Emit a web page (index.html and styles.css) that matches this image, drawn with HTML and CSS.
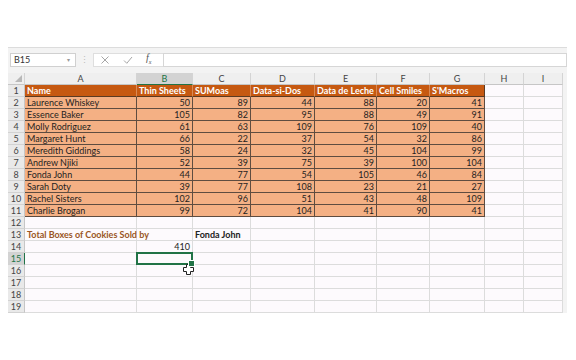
FILE: index.html
```html
<!DOCTYPE html>
<html lang="en">

<head>
  <meta charset="UTF-8" />
  <title>Cookie Sales – Sheet1</title>
  <link rel="stylesheet" href="styles.css">
</head>

<body>
  <div class="app">
    <div class="formula-bar">
      <div class="name-box">B15<span class="caret">&#9662;</span></div>
      <div class="grip">&#8942;</div>
      <div class="fx-tools">
        <svg class="tool" width="10" height="10" viewBox="0 0 10 10"><path d="M1.5 1.5 L8.5 8.5 M8.5 1.5 L1.5 8.5" stroke="#a6a6a6" stroke-width="1" fill="none"/></svg>
        <svg class="tool" width="10" height="10" viewBox="0 0 10 10"><path d="M1 5.5 L3.8 8.3 L9 2" stroke="#a6a6a6" stroke-width="1" fill="none"/></svg>
        <span class="fx">f<sub>x</sub></span>
      </div>
      <div class="formula-input"></div>
    </div>

    <div class="sheet-wrap">
      <table class="sheet">
        <colgroup>
          <col class="c-row"><col class="c-a"><col class="c-b"><col class="c-c"><col class="c-d">
          <col class="c-e"><col class="c-f"><col class="c-g"><col class="c-h"><col class="c-i">
        </colgroup>
        <thead>
          <tr>
            <th class="corner"></th>
            <th>A</th><th class="active">B</th><th>C</th><th>D</th><th>E</th><th>F</th><th>G</th><th>H</th><th>I</th>
          </tr>
        </thead>
        <tbody>
          <tr class="head">
            <th>1</th>
            <td>Name</td><td>Thin Sheets</td><td>SUMoas</td><td>Data-si-Dos</td><td>Data de Leche</td><td>Cell Smiles</td><td class="edge">S'Macros</td><td class="blank"></td><td class="blank"></td>
          </tr>
          <tr class="data"><th>2</th><td>Laurence Whiskey</td><td>50</td><td>89</td><td>44</td><td>88</td><td>20</td><td>41</td><td class="blank"></td><td class="blank"></td></tr>
          <tr class="data"><th>3</th><td>Essence Baker</td><td>105</td><td>82</td><td>95</td><td>88</td><td>49</td><td>91</td><td class="blank"></td><td class="blank"></td></tr>
          <tr class="data"><th>4</th><td>Molly Rodriguez</td><td>61</td><td>63</td><td>109</td><td>76</td><td>109</td><td>40</td><td class="blank"></td><td class="blank"></td></tr>
          <tr class="data"><th>5</th><td>Margaret Hunt</td><td>66</td><td>22</td><td>37</td><td>54</td><td>32</td><td>86</td><td class="blank"></td><td class="blank"></td></tr>
          <tr class="data"><th>6</th><td>Meredith Giddings</td><td>58</td><td>24</td><td>32</td><td>45</td><td>104</td><td>99</td><td class="blank"></td><td class="blank"></td></tr>
          <tr class="data"><th>7</th><td>Andrew Njiki</td><td>52</td><td>39</td><td>75</td><td>39</td><td>100</td><td>104</td><td class="blank"></td><td class="blank"></td></tr>
          <tr class="data"><th>8</th><td>Fonda John</td><td>44</td><td>77</td><td>54</td><td>105</td><td>46</td><td>84</td><td class="blank"></td><td class="blank"></td></tr>
          <tr class="data"><th>9</th><td>Sarah Doty</td><td>39</td><td>77</td><td>108</td><td>23</td><td>21</td><td>27</td><td class="blank"></td><td class="blank"></td></tr>
          <tr class="data"><th>10</th><td>Rachel Sisters</td><td>102</td><td>96</td><td>51</td><td>43</td><td>48</td><td>109</td><td class="blank"></td><td class="blank"></td></tr>
          <tr class="data last"><th>11</th><td>Charlie Brogan</td><td>99</td><td>72</td><td>104</td><td>41</td><td>90</td><td>41</td><td class="blank"></td><td class="blank"></td></tr>
          <tr><th>12</th><td></td><td></td><td></td><td></td><td></td><td></td><td></td><td></td><td></td></tr>
          <tr><th>13</th><td class="label">Total Boxes of Cookies Sold by</td><td></td><td class="pick">Fonda John</td><td></td><td></td><td></td><td></td><td></td><td></td></tr>
          <tr><th>14</th><td></td><td class="num">410</td><td></td><td></td><td></td><td></td><td></td><td></td><td></td></tr>
          <tr><th class="active">15</th><td></td><td class="sel"></td><td></td><td></td><td></td><td></td><td></td><td></td><td></td></tr>
          <tr><th>16</th><td></td><td></td><td></td><td></td><td></td><td></td><td></td><td></td><td></td></tr>
          <tr><th>17</th><td></td><td></td><td></td><td></td><td></td><td></td><td></td><td></td><td></td></tr>
          <tr><th>18</th><td></td><td></td><td></td><td></td><td></td><td></td><td></td><td></td><td></td></tr>
          <tr><th>19</th><td></td><td></td><td></td><td></td><td></td><td></td><td></td><td></td><td></td></tr>
        </tbody>
      </table>

      <!-- mouse pointer over the fill handle -->
      <svg class="pointer" width="11" height="11" viewBox="0 0 11 11">
        <path d="M3.5 0.5 H7.5 V3.5 H10.5 V7.5 H7.5 V10.5 H3.5 V7.5 H0.5 V3.5 H3.5 Z" fill="#fff" stroke="#222" stroke-width="1"/>
      </svg>
    </div>
  </div>
</body>

</html>
```

FILE: styles.css
```css
* {
  margin: 0;
  padding: 0;
  box-sizing: border-box;
}

body {
  background: #fff;
  font-family: 'Lato', 'Open Sans', sans-serif;
  color: #222;
}

.app {
  padding: 47px 9px 0 8px;
}

/* ---- formula bar ---- */

.formula-bar {
  display: flex;
  align-items: flex-start;
  height: 26px;
  padding: 5px 0 0 2px;
  background: #f3f3f3;
  border-top: 1px solid #dcdcdc;
}

.name-box {
  position: relative;
  width: 66px;
  height: 14px;
  padding-left: 3px;
  background: #fff;
  border: 1px solid #d0d0d0;
  font-size: 9px;
  line-height: 12px;
  color: #333;
}

.caret {
  position: absolute;
  right: 5px;
  top: 0;
  font-size: 6px;
  color: #999;
}

.grip {
  width: 17px;
  text-align: center;
  font-size: 9px;
  line-height: 14px;
  color: #bbb;
}

.fx-tools {
  display: flex;
  align-items: center;
  gap: 13px;
  width: 70px;
  height: 14px;
  padding-left: 6px;
  background: #fff;
  border: 1px solid #dedede;
  border-right: none;
}

.fx {
  font-family: 'Liberation Serif', serif;
  font-style: italic;
  font-size: 10px;
  color: #555;
  line-height: 12px;
}

.fx sub {
  font-size: 6px;
}

.formula-input {
  flex: 1;
  height: 14px;
  background: #fff;
  border: 1px solid #d6d6d6;
}

/* ---- grid ---- */

.sheet-wrap {
  position: relative;
  background: #f3f3f3;
}

.sheet {
  table-layout: fixed;
  border-collapse: separate;
  border-spacing: 0;
  width: 555px;
  font-size: 9px;
  background: #fdfafd;
}

.c-row { width: 17px; }
.c-a { width: 112px; }
.c-b { width: 56px; }
.c-c { width: 58px; }
.c-d { width: 64px; }
.c-e { width: 62px; }
.c-f { width: 53px; }
.c-g { width: 55px; }
.c-h { width: 39px; }
.c-i { width: 39px; }

.sheet tr {
  height: 12px;
}

.sheet th,
.sheet td {
  height: 12px;
  line-height: 11px;
  padding: 0 2px;
  white-space: nowrap;
  overflow: visible;
  border-right: 1px solid #dcdcdc;
  border-bottom: 1px solid #dcdcdc;
}

.sheet thead th {
  background: #efefef;
  font-weight: normal;
  color: #444;
  text-align: center;
  border-right: 1px solid #d4d4d4;
  border-bottom: 1px solid #c6c6c6;
}

.sheet thead th.active {
  background: #d3d3d3;
  color: #217346;
  border-bottom: 1px solid #217346;
}

.corner {
  position: relative;
}

.corner::after {
  content: "";
  position: absolute;
  right: 2px;
  bottom: 2px;
  border-left: 7px solid transparent;
  border-bottom: 7px solid #b8b8b8;
}

.sheet tbody th {
  background: #e9e9e9;
  font-weight: normal;
  color: #444;
  text-align: center;
  padding: 0;
  border-right: 1px solid #c6c6c6;
  border-bottom: 1px solid #d2d2d2;
}

.sheet tbody th.active {
  background: #d3d3d3;
  color: #217346;
  border-right: 1px solid #217346;
}

/* header row of the table */

.head td {
  background: #c65911;
  color: #fff;
  font-weight: bold;
  border-right: 1px solid #d98a55;
  border-bottom: 1px solid #5a3a22;
}

.head td.edge {
  border-right: 1px solid #5a3a22;
}

.data td {
  background: #f4b084;
  color: #1e1e1e;
  text-align: right;
  border-right: 1px solid #5e4c40;
  border-bottom: 1px solid #5e4c40;
}

.data td:nth-child(2) {
  text-align: left;
}

.head td.blank,
.data td.blank {
  background: #fdfafd;
  border-right: 1px solid #dcdcdc;
  border-bottom: 1px solid #dcdcdc;
}

.label {
  font-weight: bold;
  color: #9a5624;
}

.pick {
  font-weight: bold;
}

.num {
  text-align: right;
}

.sel {
  position: relative;
}

.sel::after {
  content: "";
  position: absolute;
  left: -1px;
  top: -1px;
  right: -1px;
  bottom: -1px;
  border: 2px solid #217346;
}

.sel::before {
  content: "";
  position: absolute;
  right: -3px;
  bottom: -3px;
  width: 5px;
  height: 5px;
  background: #217346;
  border: 1px solid #fff;
  z-index: 1;
}

.pointer {
  position: absolute;
  left: 175px;
  top: 191px;
}
```
